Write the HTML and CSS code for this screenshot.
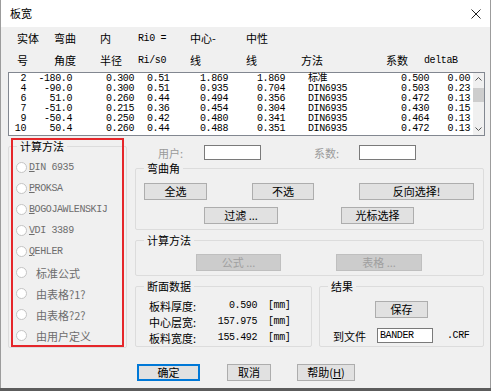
FILE: index.html
```html
<!DOCTYPE html>
<html lang="zh">
<head>
<meta charset="UTF-8">
<title>板宽</title>
<link rel="stylesheet" href="styles.css">
</head>
<body>
<div class="window">
    <div class="titlebar">
        <span>板宽</span>
        <svg class="close" width="10" height="10" viewBox="0 0 10 10"><path d="M0.5 0.5 L9.5 9.5 M9.5 0.5 L0.5 9.5" stroke="#222" stroke-width="1" fill="none"/></svg>
    </div>
    <div class="body">
        <!-- column headers -->
        <div class="head">
            <div class="head-row">
                <span>实体</span><span>弯曲</span><span>内</span><span class="mono">Ri0 =</span><span>中心-</span><span>中性</span>
            </div>
            <div class="head-row">
                <span>号</span><span>角度</span><span>半径</span><span class="mono">Ri/s0</span><span>线</span><span>线</span><span>方法</span><span>系数</span><span class="mono">deltaB</span>
            </div>
        </div>

        <div class="list">
            <div class="rows">
                <div class="row"><span>2</span><span>-180.0</span><span>0.300</span><span>0.51</span><span>1.869</span><span>1.869</span><span>标准</span><span>0.500</span><span>0.00</span></div>
                <div class="row"><span>4</span><span>-90.0</span><span>0.300</span><span>0.51</span><span>0.935</span><span>0.704</span><span>DIN6935</span><span>0.503</span><span>0.23</span></div>
                <div class="row"><span>6</span><span>51.0</span><span>0.260</span><span>0.44</span><span>0.494</span><span>0.356</span><span>DIN6935</span><span>0.472</span><span>0.13</span></div>
                <div class="row"><span>7</span><span>-51.0</span><span>0.215</span><span>0.36</span><span>0.454</span><span>0.304</span><span>DIN6935</span><span>0.430</span><span>0.15</span></div>
                <div class="row"><span>9</span><span>-50.4</span><span>0.250</span><span>0.42</span><span>0.480</span><span>0.341</span><span>DIN6935</span><span>0.464</span><span>0.13</span></div>
                <div class="row"><span>10</span><span>50.4</span><span>0.260</span><span>0.44</span><span>0.488</span><span>0.351</span><span>DIN6935</span><span>0.472</span><span>0.13</span></div>
            </div>
            <div class="vscroll">
                <div class="sb-btn"><svg width="7" height="4" viewBox="0 0 7 4"><polyline points="0.5,3.5 3.5,0.5 6.5,3.5" stroke="#555" fill="none"/></svg></div>
                <div class="thumb"></div>
                <div class="sb-fill"></div>
                <div class="sb-btn"><svg width="7" height="4" viewBox="0 0 7 4"><polyline points="0.5,0.5 3.5,3.5 6.5,0.5" stroke="#555" fill="none"/></svg></div>
            </div>
        </div>

        <div class="lower">
            <div class="left">
                <fieldset class="group methods">
                    <legend>计算方法</legend>
                    <div class="radio"><i></i><span class="mono"><u>D</u>IN 6935</span></div>
                    <div class="radio"><i></i><span class="mono"><u>P</u>ROKSA</span></div>
                    <div class="radio"><i></i><span class="mono"><u>B</u>OGOJAWLENSKIJ</span></div>
                    <div class="radio"><i></i><span class="mono"><u>V</u>DI 3389</span></div>
                    <div class="radio"><i></i><span class="mono"><u>Q</u>EHLER</span></div>
                    <div class="radio"><i></i><span class="cn">标准公式</span></div>
                    <div class="radio"><i></i><span class="cn">由表格?1?</span></div>
                    <div class="radio"><i></i><span class="cn">由表格?2?</span></div>
                    <div class="radio"><i></i><span class="cn">由用户定义</span></div>
                </fieldset>
                <div class="mark"></div>
            </div>

            <div class="right">
                <div class="user-row">
                    <span class="dim lbl-user">用户:</span>
                    <span class="field"></span>
                    <span class="dim lbl-coef">系数:</span>
                    <span class="field"></span>
                </div>

                <fieldset class="group angle">
                    <legend>弯曲角</legend>
                    <div class="btn-row">
                        <button class="b-all">全选</button>
                        <button class="b-none">不选</button>
                        <button class="b-inv">反向选择!</button>
                    </div>
                    <div class="btn-row second">
                        <button class="b-filter">过滤 ...</button>
                        <button class="b-cursor">光标选择</button>
                    </div>
                </fieldset>

                <fieldset class="group calc">
                    <legend>计算方法</legend>
                    <div class="btn-row">
                        <button class="b-formula" disabled>公式 ...</button>
                        <button class="b-table" disabled>表格 ...</button>
                    </div>
                </fieldset>

                <div class="pair">
                    <fieldset class="group section">
                        <legend>断面数据</legend>
                        <div class="data-row"><span>板料厚度:</span><span class="mono val">0.590</span><span class="mono unit">[mm]</span></div>
                        <div class="data-row"><span>中心层宽:</span><span class="mono val">157.975</span><span class="mono unit">[mm]</span></div>
                        <div class="data-row"><span>板料宽度:</span><span class="mono val">155.492</span><span class="mono unit">[mm]</span></div>
                    </fieldset>
                    <fieldset class="group result">
                        <legend>结果</legend>
                        <div class="save-row"><button class="b-save">保存</button></div>
                        <div class="file-row">
                            <span class="lbl-file">到文件</span>
                            <span class="field file mono">BANDER</span>
                            <span class="mono ext">.CRF</span>
                        </div>
                    </fieldset>
                </div>

                <div class="actions">
                    <button class="b-ok">确定</button>
                    <button class="b-cancel">取消</button>
                    <button class="b-help">帮助(<u>H</u>)</button>
                </div>
            </div>
        </div>
    </div>
</div>
</body>
</html>
```

FILE: styles.css
```css
* {
    box-sizing: border-box;
}
body {
    margin: 0;
    width: 491px;
    height: 391px;
    overflow: hidden;
    background-color: #5c5c5c;
    font-family: "Noto Sans CJK SC", sans-serif;
    font-size: 11px;
    color: #000;
}
.mono {
    font-family: "Liberation Mono", "Noto Sans CJK SC", monospace;
    font-size: 10px;
    letter-spacing: -0.4px;
}
.window {
    height: 388px;
    background-color: #f0f0f0;
    border-left: 1px solid #9c9c9c;
    border-right: 1px solid #9c9c9c;
}
.titlebar {
    height: 27px;
    background-color: #fff;
    display: flex;
    align-items: center;
    justify-content: space-between;
    padding: 0 9px 0 9px;
    line-height: 27px;
}
.body {
    padding: 0 5px 0 7px;
}

/* headers */
.head {
    padding: 1px 0 0 9px;
}
.head-row {
    height: 21px;
    line-height: 21px;
    display: grid;
    grid-template-columns: 37px 46px 38px 52px 56px 55px 85px 38px auto;
    margin-bottom: 1px;
}

/* list box */
.list {
    margin-top: 1px;
    height: 64px;
    border: 1px solid #828790;
    background-color: #fff;
    display: flex;
}
.rows {
    flex: 1;
    padding-top: 1px;
}
.row {
    height: 10px;
    line-height: 10px;
    display: grid;
    grid-template-columns: 17px 46px 62px 36px 58px 57px 95px 49px 41px;
    font-family: "Liberation Mono", "Noto Sans CJK SC", monospace;
    font-size: 10px;
    letter-spacing: -0.4px;
    white-space: nowrap;
}
.row span {
    text-align: right;
}
.row span:nth-child(4) {
    text-align: left;
    padding-left: 13px;
}
.row span:nth-child(7) {
    text-align: left;
    padding-left: 23px;
}
.vscroll {
    width: 11px;
    background-color: #f0f0f0;
    display: flex;
    flex-direction: column;
}
.sb-btn {
    height: 12px;
    display: flex;
    align-items: center;
    justify-content: center;
}
.thumb {
    height: 14px;
    margin-top: 3px;
    background-color: #cdcdcd;
}
.sb-fill {
    flex: 1;
}

/* lower area */
.lower {
    display: grid;
    grid-template-columns: 119px 349px;
    column-gap: 8px;
}
.left {
    position: relative;
}
.group {
    margin: 0;
    min-width: 0;
    border: 1px solid #dcdcdc;
    border-radius: 2px;
    padding: 0 8px;
}
.group legend {
    padding: 0 3px;
    height: 16px;
    line-height: 16px;
}
.methods {
    margin-top: 2px;
    padding: 3px 0 1px 7px;
}
.methods legend {
    margin-left: 1px;
}
.radio {
    height: 21px;
    display: flex;
    align-items: center;
    color: #6d6d6d;
    white-space: nowrap;
}
.radio i {
    width: 11px;
    height: 11px;
    border-radius: 50%;
    border: 1px solid #c4c4c4;
    background-color: #fff;
    margin-right: 2px;
    flex: none;
}
.radio .cn {
    padding-left: 7px;
}
.mark {
    position: absolute;
    left: 3px;
    top: 2px;
    width: 113px;
    height: 209px;
    border: 2px solid #e5262a;
}

/* right column */
.user-row {
    margin-top: 9px;
    height: 15px;
    display: flex;
    align-items: center;
    padding-left: 23px;
}
.dim {
    color: #9a9a9a;
}
.lbl-user {
    width: 46px;
}
.lbl-coef {
    width: 45px;
    margin-left: 53px;
}
.field {
    width: 57px;
    height: 15px;
    border: 1px solid #7a7a7a;
    background-color: #fff;
}
button {
    height: 17px;
    padding: 0;
    font-family: "Noto Sans CJK SC", sans-serif;
    font-size: 11px;
    line-height: 15px;
    color: #000;
    background-color: #e1e1e1;
    border: 1px solid #adadad;
}
button:disabled {
    background-color: #cccccc;
    border-color: #bfbfbf;
    color: #a0a0a0;
}
.btn-row {
    display: flex;
}
.angle {
    padding-top: 7px;
    padding-bottom: 5px;
}
.angle .second {
    margin-top: 7px;
}
.b-all { width: 63px; }
.b-none { width: 62px; margin-left: 45px; }
.b-inv { width: 115px; margin-left: 45px; }
.b-filter { width: 74px; margin-left: 60px; }
.b-cursor { width: 73px; margin-left: 63px; }
.calc {
    margin-top: 2px;
    padding-top: 6px;
    padding-bottom: 4px;
}
.b-formula { width: 85px; margin-left: 52px; }
.b-table { width: 86px; margin-left: 55px; }

.pair {
    margin-top: 2px;
    display: grid;
    grid-template-columns: 177px 165px;
    column-gap: 7px;
}
.section {
    padding-top: 4px;
    padding-bottom: 0;
}
.data-row {
    height: 16px;
    line-height: 16px;
    display: grid;
    grid-template-columns: 60px 48px auto;
    padding-left: 5px;
    white-space: nowrap;
}
.data-row .val {
    text-align: right;
}
.data-row .unit {
    padding-left: 11px;
}
.result {
    padding-top: 7px;
    padding-bottom: 3px;
}
.save-row {
    display: flex;
    justify-content: center;
}
.b-save {
    width: 53px;
}
.file-row {
    margin-top: 10px;
    height: 15px;
    display: flex;
    align-items: center;
    padding-left: 5px;
}
.lbl-file {
    width: 44px;
}
.file {
    width: 56px;
    padding-left: 2px;
    line-height: 13px;
}
.ext {
    margin-left: 14px;
}

.actions {
    margin-top: 17px;
    display: flex;
    padding-left: 2px;
}
.b-ok {
    width: 63px;
    border-color: #0078d7;
    box-shadow: inset 0 0 0 1px #0078d7;
}
.b-cancel { width: 44px; margin-left: 27px; }
.b-help { width: 58px; margin-left: 26px; }
```
